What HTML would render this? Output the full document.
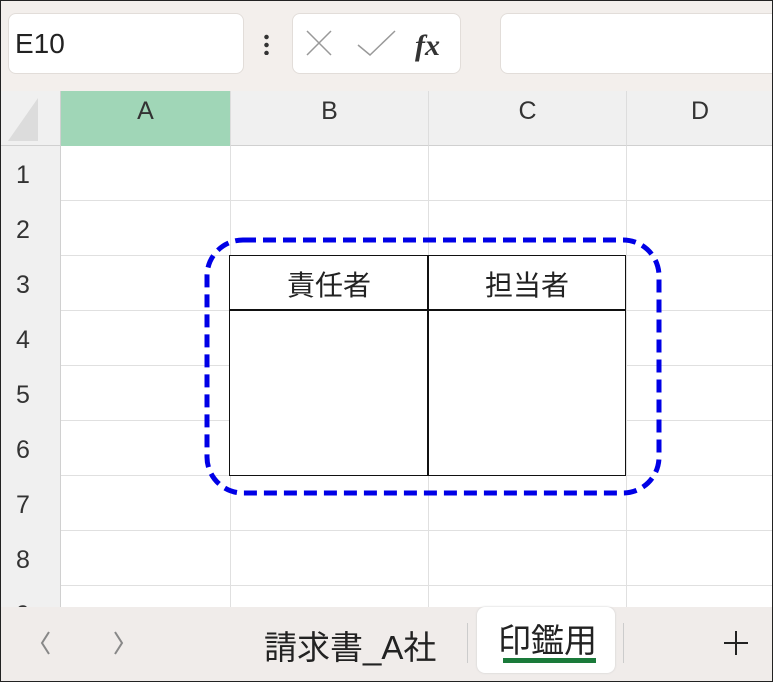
<!DOCTYPE html>
<html><head><meta charset="utf-8"><style>
*{margin:0;padding:0;box-sizing:border-box}
body{width:773px;height:682px;overflow:hidden;background:#fff;font-family:"Liberation Sans","Noto Sans CJK JP",sans-serif;position:relative}
.abs{position:absolute}
.frame{left:0;top:0;width:773px;height:682px;border:1px solid #222;z-index:20;pointer-events:none}
.tb{left:0;top:0;width:773px;height:91px;background:#f3efec}
.box{background:#fff;border:1px solid #e2ddd9;border-radius:8px}
.hdr{top:91px;height:55px;background:#f0f0f0;border-bottom:1px solid #d0d0d0;color:#333;font-size:25px;text-align:center;line-height:40px}
.rh{left:0;width:61px;height:55px;background:#f0f0f0;border-right:1px solid #d0d0d0;color:#333;font-size:25px;line-height:58px;padding-left:16px}
.vl{top:146px;width:1px;height:470px;background:#e0e0e0}
.hl{left:61px;width:712px;height:1px;background:#e0e0e0}
</style></head><body>
<div class="abs tb"></div>
<div class="abs box" style="left:8px;top:13px;width:236px;height:61px"></div>
<div class="abs" style="left:15px;top:28px;font-size:28px;color:#222">E10</div>
<div class="abs" style="left:264px;top:33px;width:5px;height:22px;background:radial-gradient(circle,#333 2px,transparent 2.5px) 0 0/5px 8px"></div>
<div class="abs box" style="left:292px;top:13px;width:169px;height:61px"></div>
<svg class="abs" style="left:300px;top:25px" width="160" height="40"><path d="M7 6 L31 30 M31 6 L7 30" stroke="#999" stroke-width="1.5"/><path d="M58 20 L70 30 L95 6" stroke="#999" stroke-width="1.5" fill="none"/><text x="115" y="30" font-family="Liberation Serif" font-style="italic" font-weight="bold" font-size="30" fill="#333">fx</text></svg>
<div class="abs box" style="left:500px;top:13px;width:290px;height:61px"></div>
<div class="abs" style="left:0;top:91px;width:61px;height:55px;background:#f0f0f0;border-right:1px solid #d0d0d0;border-bottom:1px solid #d0d0d0"></div>
<svg class="abs" style="left:8px;top:98px" width="50" height="45"><path d="M0 43 L30 0 L30 43 Z" fill="#dcdcdc"/></svg>
<div class="abs hdr" style="left:61px;width:169px;background:#a0d6b7;border-bottom-color:#a0d6b7">A</div>
<div class="abs hdr" style="left:230px;width:198px;border-left:1px solid #ddd">B</div>
<div class="abs hdr" style="left:428px;width:198px;border-left:1px solid #ddd">C</div>
<div class="abs hdr" style="left:626px;width:147px;border-left:1px solid #ddd">D</div>
<div class="abs rh" style="top:146px">1</div><div class="abs rh" style="top:201px">2</div><div class="abs rh" style="top:256px">3</div><div class="abs rh" style="top:311px">4</div><div class="abs rh" style="top:366px">5</div><div class="abs rh" style="top:421px">6</div><div class="abs rh" style="top:476px">7</div><div class="abs rh" style="top:531px">8</div><div class="abs rh" style="top:586px">9</div>
<div class="abs vl" style="left:230px"></div><div class="abs vl" style="left:428px"></div><div class="abs vl" style="left:626px"></div>
<div class="abs hl" style="top:200px"></div><div class="abs hl" style="top:255px"></div><div class="abs hl" style="top:310px"></div><div class="abs hl" style="top:365px"></div><div class="abs hl" style="top:420px"></div><div class="abs hl" style="top:475px"></div><div class="abs hl" style="top:530px"></div><div class="abs hl" style="top:585px"></div>
<div class="abs" style="left:229px;top:255px;width:397px;height:221px;border:1.5px solid #111;background:#fff"></div>
<div class="abs" style="left:229px;top:309px;width:397px;height:1.5px;background:#111"></div>
<div class="abs" style="left:427px;top:255px;width:1.5px;height:221px;background:#111"></div>
<div class="abs" style="left:230px;top:264px;width:198px;text-align:center;font-size:28px;color:#222">責任者</div>
<div class="abs" style="left:428px;top:264px;width:198px;text-align:center;font-size:28px;color:#222">担当者</div>
<svg class="abs" style="left:0;top:0" width="773" height="682"><rect x="207" y="240" width="452" height="253" rx="36" fill="none" stroke="#0000e6" stroke-width="5" stroke-dasharray="13 7"/></svg>
<div class="abs" style="left:0;top:607px;width:773px;height:75px;background:#f0ecea"></div>
<div class="abs" style="left:477px;top:607px;width:138px;height:66px;background:#fff;border-radius:8px;box-shadow:0 0 2px #ccc"></div>
<div class="abs" style="left:503px;top:658px;width:93px;height:5px;background:#1a7a3a"></div>
<div class="abs" style="left:498px;top:614px;font-size:33px;color:#222;white-space:nowrap">印鑑用</div>
<div class="abs" style="left:264px;top:621px;font-size:33px;color:#222;white-space:nowrap">請求書_A社</div>
<div class="abs" style="left:467px;top:623px;width:1px;height:40px;background:#ccc"></div>
<div class="abs" style="left:623px;top:623px;width:1px;height:40px;background:#ccc"></div>
<svg class="abs" style="left:30px;top:628px" width="100" height="30"><path d="M19 4 L12 15 L19 26 M85 4 L92 15 L85 26" stroke="#888" stroke-width="2" fill="none"/></svg>
<svg class="abs" style="left:722px;top:629px" width="28" height="28"><path d="M14 2 V26 M2 14 H26" stroke="#222" stroke-width="2"/></svg>
<div class="abs frame"></div>
</body></html>
